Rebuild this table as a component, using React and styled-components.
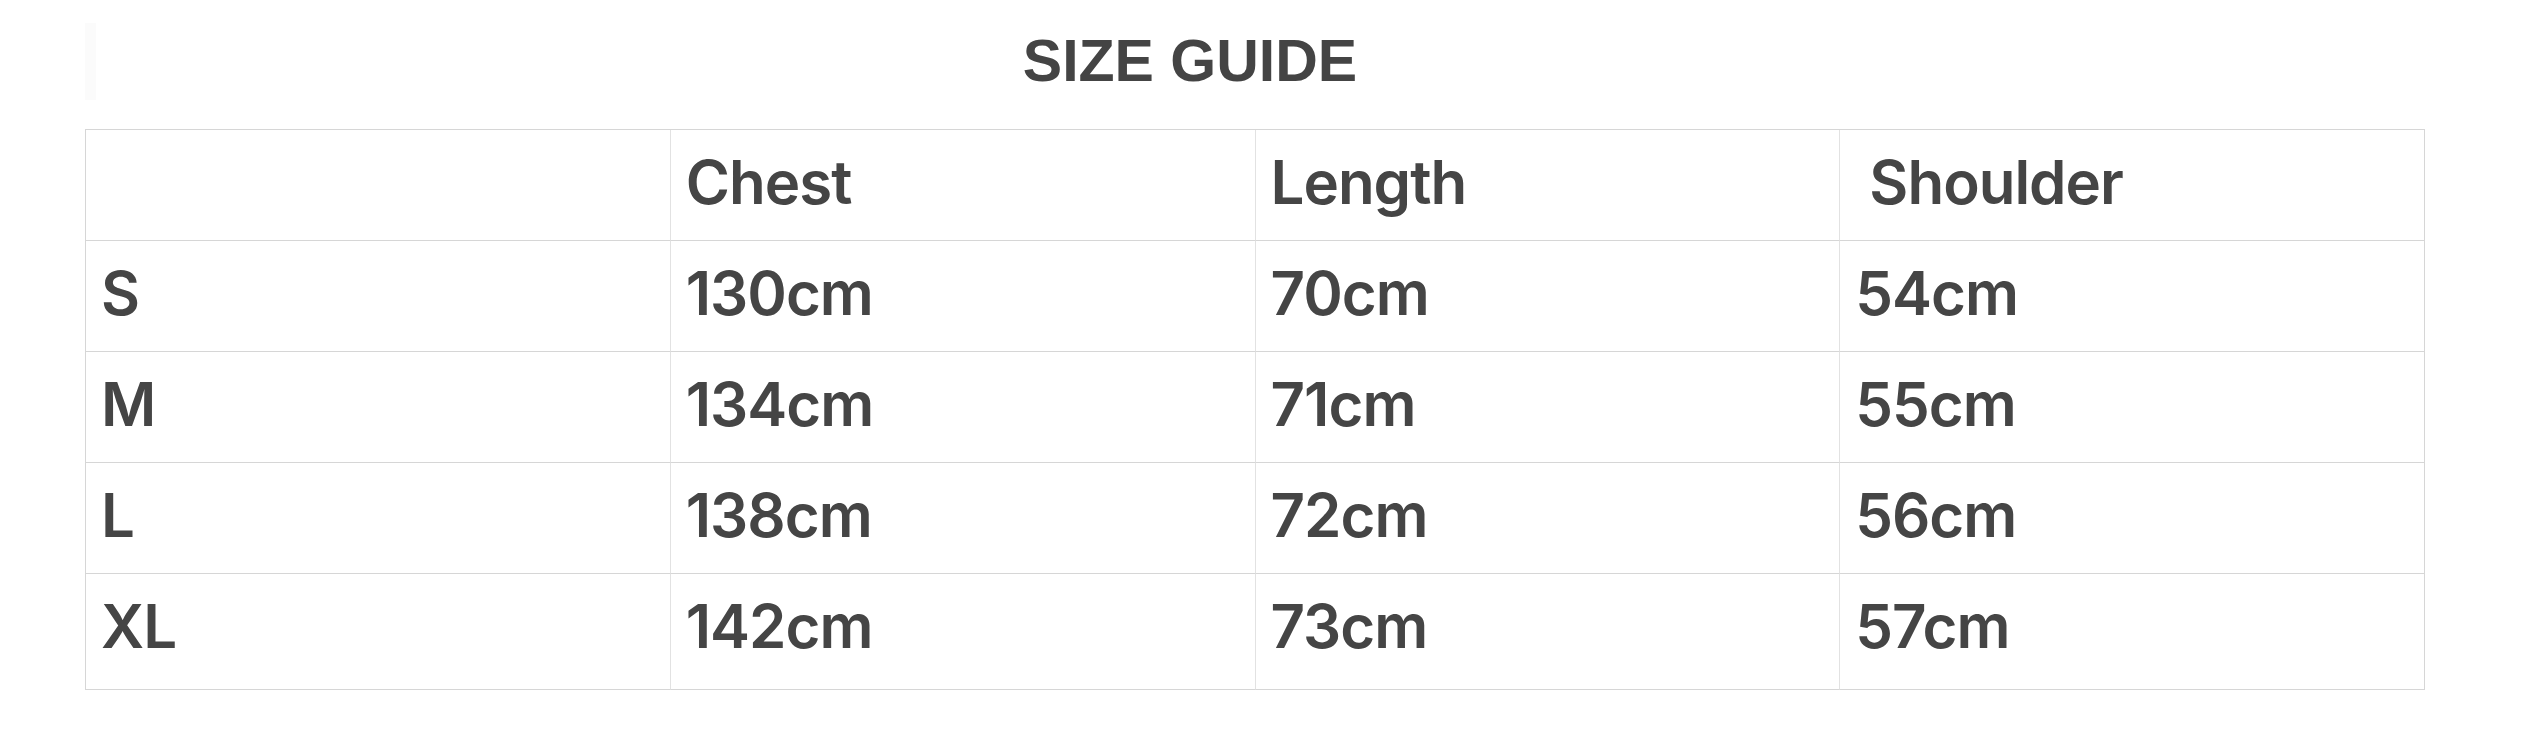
import React from 'react'
import styled, { createGlobalStyle } from 'styled-components'

const rows = [
  ['S', '130cm', '70cm', '54cm'],
  ['M', '134cm', '71cm', '55cm'],
  ['L', '138cm', '72cm', '56cm'],
  ['XL', '142cm', '73cm', '57cm'],
]

const headers = ['', 'Chest', 'Length', '\u00a0Shoulder']

function App() {
  return (
    <>
      <GlobalStyle />
      <Page>
        <TitleBar>
          <Strip />
          <Title>SIZE GUIDE</Title>
        </TitleBar>
        <Table>
          {headers.map((h, i) => (
            <Cell key={'h' + i} $col={i}>{h}</Cell>
          ))}
          {rows.map((row, r) =>
            row.map((v, i) => (
              <Cell key={r + '-' + i} $col={i} $last={r === rows.length - 1}>
                {v}
              </Cell>
            ))
          )}
        </Table>
      </Page>
    </>
  )
}

export default App

const GlobalStyle = createGlobalStyle`
body {
  margin: 0;
  background: #ffffff;
}
`

const Page = styled.div`
width: 2528px;
height: 754px;
padding: 23px 0 0 85px;
box-sizing: border-box;
`

const TitleBar = styled.div`
display: flex;
height: 77px;
margin-bottom: 29px;
`

const Strip = styled.div`
width: 11px;
height: 77px;
background: #fbfbfb;
`

const Title = styled.h1`
width: 2188px;
margin: 0;
text-align: center;
font-family: "Liberation Sans", Arial, sans-serif;
font-weight: 700;
font-size: 59px;
line-height: 77px;
color: #444444;
`

const Table = styled.div`
width: 2340px;
display: grid;
grid-template-columns: repeat(4, 1fr);
border-top: 1px solid #d6d6d6;
border-left: 1px solid #d6d6d6;
box-sizing: border-box;
`

const Cell = styled.div`
height: ${p => (p.$last ? 116 : 111)}px;
padding: 16px 0 0 15px;
box-sizing: border-box;
border-bottom: 1px solid #d6d6d6;
border-right: 1px solid ${p => (p.$col === 3 ? '#d6d6d6' : '#e2e2e2')};
font-family: Inter, "Noto Sans", sans-serif;
font-weight: 600;
font-size: 60px;
line-height: 72px;
letter-spacing: -1px;
color: #454545;
white-space: pre;
`
